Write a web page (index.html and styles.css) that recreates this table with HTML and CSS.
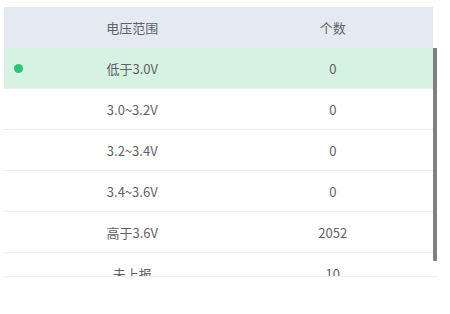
FILE: index.html
```html
<!DOCTYPE html>
<html lang="zh">
<head>
<meta charset="utf-8">
<link rel="stylesheet" href="styles.css">
</head>
<body>
<div class="table">
  <div class="head row">
    <div class="cell dot-cell"></div>
    <div class="cell">电压范围</div>
    <div class="cell">个数</div>
  </div>
  <div class="body-wrap">
    <div class="body">
      <div class="row active">
        <div class="cell dot-cell"><span class="dot"></span></div>
        <div class="cell">低于3.0V</div>
        <div class="cell">0</div>
      </div>
      <div class="row">
        <div class="cell dot-cell"></div>
        <div class="cell">3.0~3.2V</div>
        <div class="cell">0</div>
      </div>
      <div class="row">
        <div class="cell dot-cell"></div>
        <div class="cell">3.2~3.4V</div>
        <div class="cell">0</div>
      </div>
      <div class="row">
        <div class="cell dot-cell"></div>
        <div class="cell">3.4~3.6V</div>
        <div class="cell">0</div>
      </div>
      <div class="row">
        <div class="cell dot-cell"></div>
        <div class="cell">高于3.6V</div>
        <div class="cell">2052</div>
      </div>
      <div class="row">
        <div class="cell dot-cell"></div>
        <div class="cell">未上报</div>
        <div class="cell">10</div>
      </div>
    </div>
    <div class="thumb"></div>
  </div>
</div>
</body>
</html>
```

FILE: styles.css
```css
html, body {
  margin: 0;
  padding: 0;
  background: #ffffff;
}
body {
  font-family: "Noto Sans CJK SC", "Noto Sans", sans-serif;
  font-size: 13px;
  color: #5f6166;
}
.table {
  margin: 7px 0 0 4px;
  width: 433px;
}
.row {
  display: grid;
  grid-template-columns: 28px 1fr 1fr;
  width: 429px;
  height: 40px;
  border-bottom: 1px solid #ebeef5;
}
.head {
  background: #e5e9f2;
  height: 41px;
  border-bottom: none;
}
.cell {
  display: flex;
  align-items: center;
  justify-content: center;
  line-height: 1;
}
.body-wrap {
  position: relative;
  height: 228px;
  border-bottom: 1px solid #ebeef5;
}
.body {
  height: 228px;
  overflow: hidden;
}
.thumb {
  position: absolute;
  top: 0;
  right: 0;
  width: 4px;
  height: 213px;
  background: #808080;
  border-radius: 0 0 1px 1px;
}
.active {
  background: #d6f2e2;
}
.dot {
  width: 9px;
  height: 9px;
  border-radius: 50%;
  background: #2dc574;
}
```
